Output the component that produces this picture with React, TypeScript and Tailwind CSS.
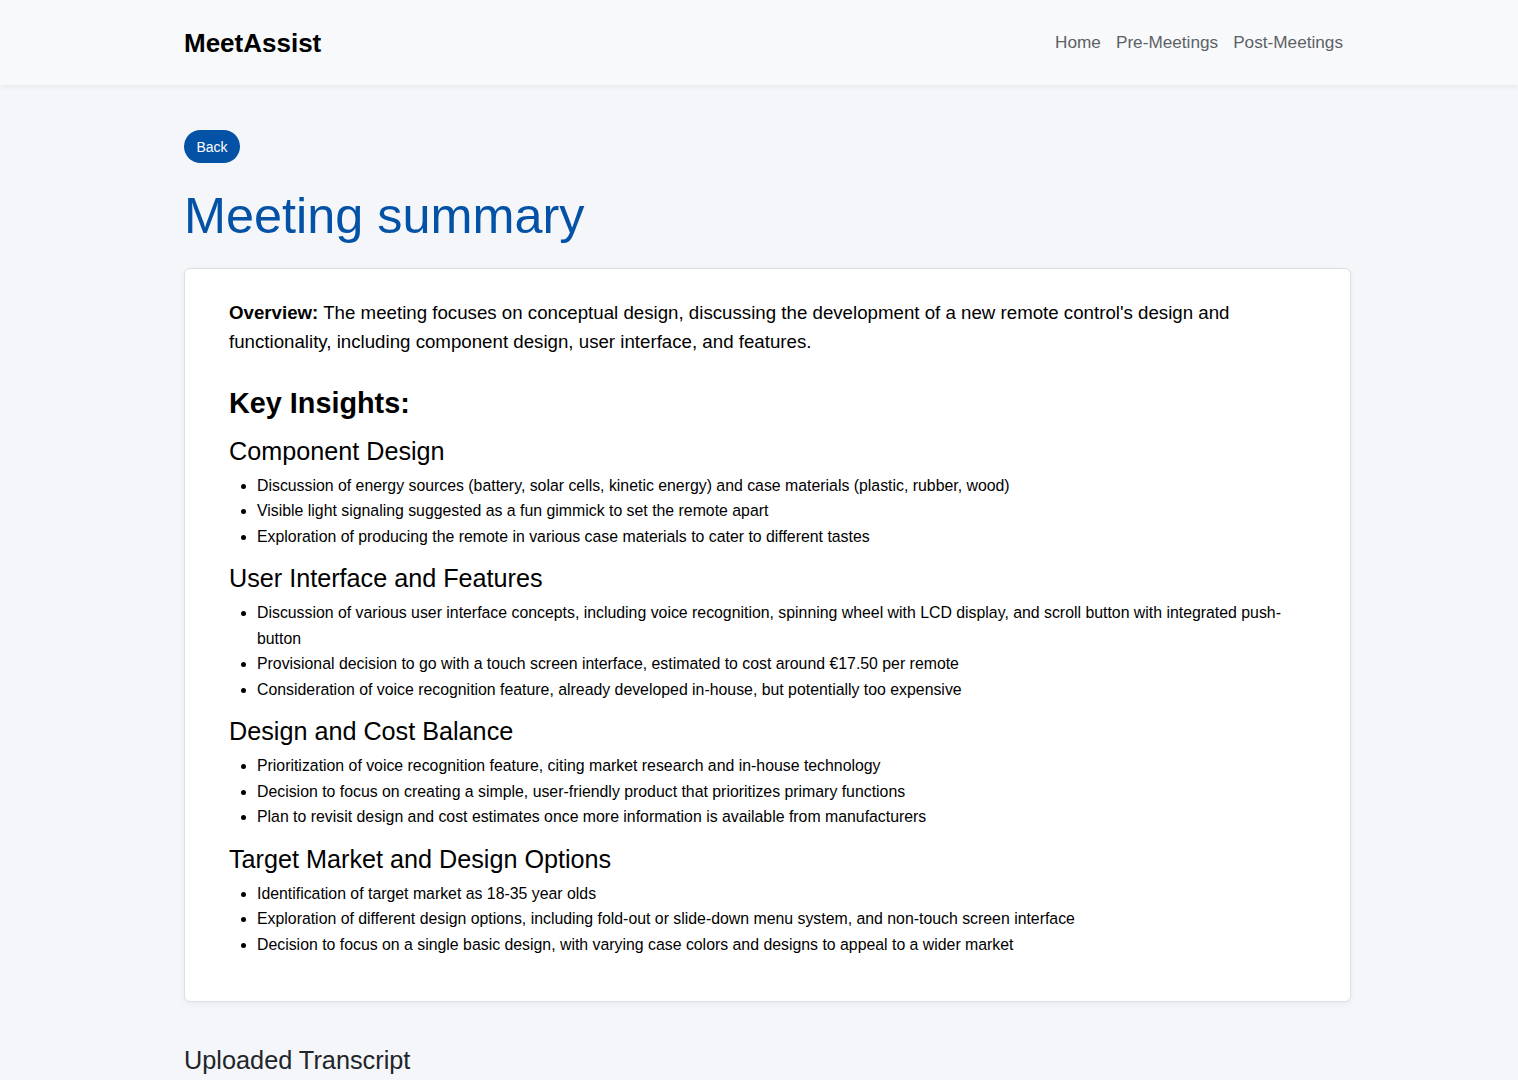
import React from "react";

const sections: { title: string; items: string[] }[] = [
  {
    title: "Component Design",
    items: [
      "Discussion of energy sources (battery, solar cells, kinetic energy) and case materials (plastic, rubber, wood)",
      "Visible light signaling suggested as a fun gimmick to set the remote apart",
      "Exploration of producing the remote in various case materials to cater to different tastes",
    ],
  },
  {
    title: "User Interface and Features",
    items: [
      "Discussion of various user interface concepts, including voice recognition, spinning wheel with LCD display, and scroll button with integrated push-button",
      "Provisional decision to go with a touch screen interface, estimated to cost around €17.50 per remote",
      "Consideration of voice recognition feature, already developed in-house, but potentially too expensive",
    ],
  },
  {
    title: "Design and Cost Balance",
    items: [
      "Prioritization of voice recognition feature, citing market research and in-house technology",
      "Decision to focus on creating a simple, user-friendly product that prioritizes primary functions",
      "Plan to revisit design and cost estimates once more information is available from manufacturers",
    ],
  },
  {
    title: "Target Market and Design Options",
    items: [
      "Identification of target market as 18-35 year olds",
      "Exploration of different design options, including fold-out or slide-down menu system, and non-touch screen interface",
      "Decision to focus on a single basic design, with varying case colors and designs to appeal to a wider market",
    ],
  },
];

export default function App() {
  return (
    <div
      className="min-h-screen bg-[#f4f6f9] text-[#212529]"
      style={{ fontFamily: '"Liberation Sans", Arial, Helvetica, sans-serif' }}
    >
      <header className="h-[85px] bg-[#f8f9fa] shadow-[0_2px_6px_rgba(0,0,0,0.06)] relative">
        <div className="ml-[184px] w-[1167px] h-full flex items-center justify-between">
          <div className="text-[26px] font-bold text-black leading-none">MeetAssist</div>
          <nav className="flex items-center gap-[15px] pr-[8px] text-[17.2px] text-[#5c6166]">
            <a href="#">Home</a>
            <a href="#">Pre-Meetings</a>
            <a href="#">Post-Meetings</a>
          </nav>
        </div>
      </header>

      <main className="ml-[184px] w-[1167px] pb-[40px]">
        <button className="mt-[45px] h-[33px] px-[12.5px] rounded-full bg-[#0452a5] text-white text-[14px] leading-none">
          Back
        </button>
        <h1 className="mt-[23px] text-[50.4px] leading-[60px] text-[#0452a5]">Meeting summary</h1>

        <div className="mt-[22px] bg-white border border-[#dcdfe3] rounded-[6px] shadow-[0_2px_6px_rgba(0,0,0,0.05)] pt-[29px] pb-[30px] px-[44px] text-black">
          <p className="text-[18.7px] leading-[29px]">
            <span className="font-bold">Overview:</span> The meeting focuses on conceptual design, discussing the
            development of a new remote control's design and functionality, including component design, user
            interface, and features.
          </p>
          <h2 className="mt-[30px] text-[28.8px] leading-[34.5px] font-bold">Key Insights:</h2>
          {sections.map((s, i) => (
            <div key={s.title}>
              <h3 className={`${i === 0 ? "mt-[15px]" : "mt-0"} mb-[7px] text-[25.2px] leading-[30px]`}>{s.title}</h3>
              <ul className="list-disc pl-[28px] mb-[14px] text-[15.85px] leading-[25.5px]">
                {s.items.map((it) => (
                  <li key={it}>{it}</li>
                ))}
              </ul>
            </div>
          ))}
        </div>

        <h3 className="mt-[43px] text-[25.3px] leading-[30px] text-[#212529]">Uploaded Transcript</h3>
      </main>
    </div>
  );
}
